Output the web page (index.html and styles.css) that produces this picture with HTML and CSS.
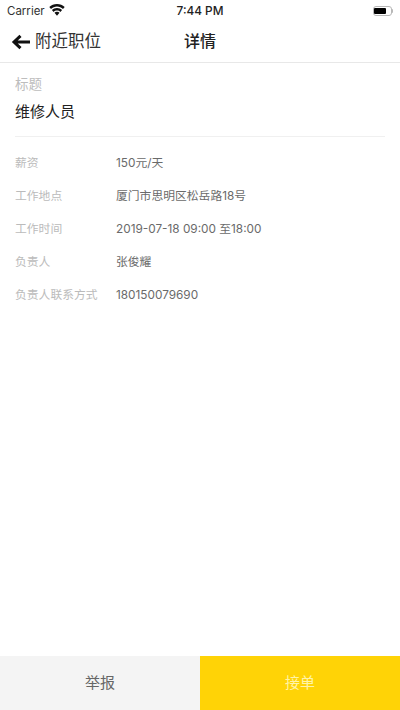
FILE: index.html
```html
<!DOCTYPE html>
<html lang="zh-CN">
<head>
<meta charset="utf-8">
<title>详情</title>
<link rel="stylesheet" href="styles.css">
</head>
<body>
<div class="app">
  <div class="status">
    <div class="status-left">
      <span>Carrier</span>
      <svg class="wifi" width="16" height="12" viewBox="0 0 16 12"><path d="M8 0C5 0 2.300 1.100.3 3L2 4.900C3.600 3.400 5.700 2.500 8 2.500s4.400.9 6 2.400L15.700 3C13.700 1.100 11 0 8 0z" fill="#111"/><path d="M8 4C6 4 4.200 4.800 2.900 6l1.700 1.900C5.500 7 6.700 6.500 8 6.500s2.500.5 3.400 1.400L13.100 6C11.800 4.800 10 4 8 4z" fill="#111"/><path d="M8 7.800c-1 0-1.900.4-2.500 1L8 11.700l2.500-2.900c-.6-.6-1.500-1-2.500-1z" fill="#111"/></svg>
    </div>
    <div class="status-time">7:44 PM</div>
    <div class="status-right">
      <div class="battery"><div class="battery-fill"></div></div>
      <div class="battery-cap"></div>
    </div>
  </div>
  <header class="nav">
    <div class="nav-back">
      <svg class="arrow" width="19" height="16" viewBox="0 0 19 16"><path d="M19 8H3.500M9.500 1.800 3 8l6.500 6.200" fill="none" stroke="#111" stroke-width="3"/></svg>
      <span>附近职位</span>
    </div>
    <div class="nav-title">详情</div>
  </header>
  <main class="content">
    <section class="head">
      <div class="head-label">标题</div>
      <div class="head-value">维修人员</div>
    </section>
    <dl class="rows">
      <div class="row"><dt>薪资</dt><dd>150元/天</dd></div>
      <div class="row"><dt>工作地点</dt><dd>厦门市思明区松岳路18号</dd></div>
      <div class="row"><dt>工作时间</dt><dd>2019-07-18 09:00 至18:00</dd></div>
      <div class="row"><dt>负责人</dt><dd>张俊耀</dd></div>
      <div class="row"><dt>负责人联系方式</dt><dd>180150079690</dd></div>
    </dl>
  </main>
  <footer class="actions">
    <div class="btn btn-report">举报</div>
    <div class="btn btn-accept">接单</div>
  </footer>
</div>
</body>
</html>
```
FILE: styles.css
```css
* { box-sizing: border-box; margin: 0; padding: 0; }
html, body { width: 400px; height: 710px; overflow: hidden; background: #fff; }
body { font-family: "Inter", "Noto Sans CJK SC", sans-serif; color: #111; }
.app { width: 400px; height: 710px; display: flex; flex-direction: column; }
.status { height: 21px; padding: 0 7px; display: grid; grid-template-columns: 1fr auto 1fr; align-items: center; font-size: 11.5px; color: #333; }
.status-left { display: flex; align-items: center; gap: 4px; }
.wifi { margin-top: -1px; }
.status-time { font-weight: 500; font-size: 11.800px; color: #222; }
.status-right { display: flex; justify-content: flex-end; align-items: center; }
.battery { width: 19px; height: 10px; border: 1px solid #b8b8b8; border-radius: 3px; padding: 1px 1px 1px 0; }
.battery-fill { width: 12px; height: 100%; background: #000; border-radius: 1px; }
.battery-cap { width: 1.5px; height: 4px; background: #b8b8b8; border-radius: 0 1px 1px 0; }
.nav { height: 42px; position: relative; display: flex; align-items: center; justify-content: center; border-bottom: 1px solid #e8e8e8; padding-bottom: 4px; }
.nav-back { position: absolute; left: 11px; top: 8px; display: flex; align-items: center; gap: 5px; font-size: 16.500px; line-height: 24px; color: #333; }
.arrow { margin-top: 2px; }
.nav-title { font-size: 16px; font-weight: 500; color: #222; }
.content { flex: 1; padding: 0 15px; }
.head { height: 74px; padding-top: 12px; border-bottom: 1px solid #f0f0f0; }
.head-label { font-size: 13.500px; line-height: 18px; color: #bdbdbd; }
.head-value { font-size: 15px; line-height: 22px; margin-top: 8px; color: #222; }
.rows { padding-top: 9px; }
.row { height: 33.200px; display: flex; align-items: center; font-size: 11.800px; }
.row dt, .row dd { line-height: 18px; height: 18px; }
.row dt { width: 101px; color: #bbb; }
.row dd { color: #6a6a6a; }
.actions { height: 54px; display: flex; }
.btn { flex: 1; display: flex; align-items: center; justify-content: center; font-size: 15px; padding-bottom: 3px; }
.btn-report { background: #f4f4f4; color: #666; }
.btn-accept { background: #ffd306; color: #fff3a8; }
```
